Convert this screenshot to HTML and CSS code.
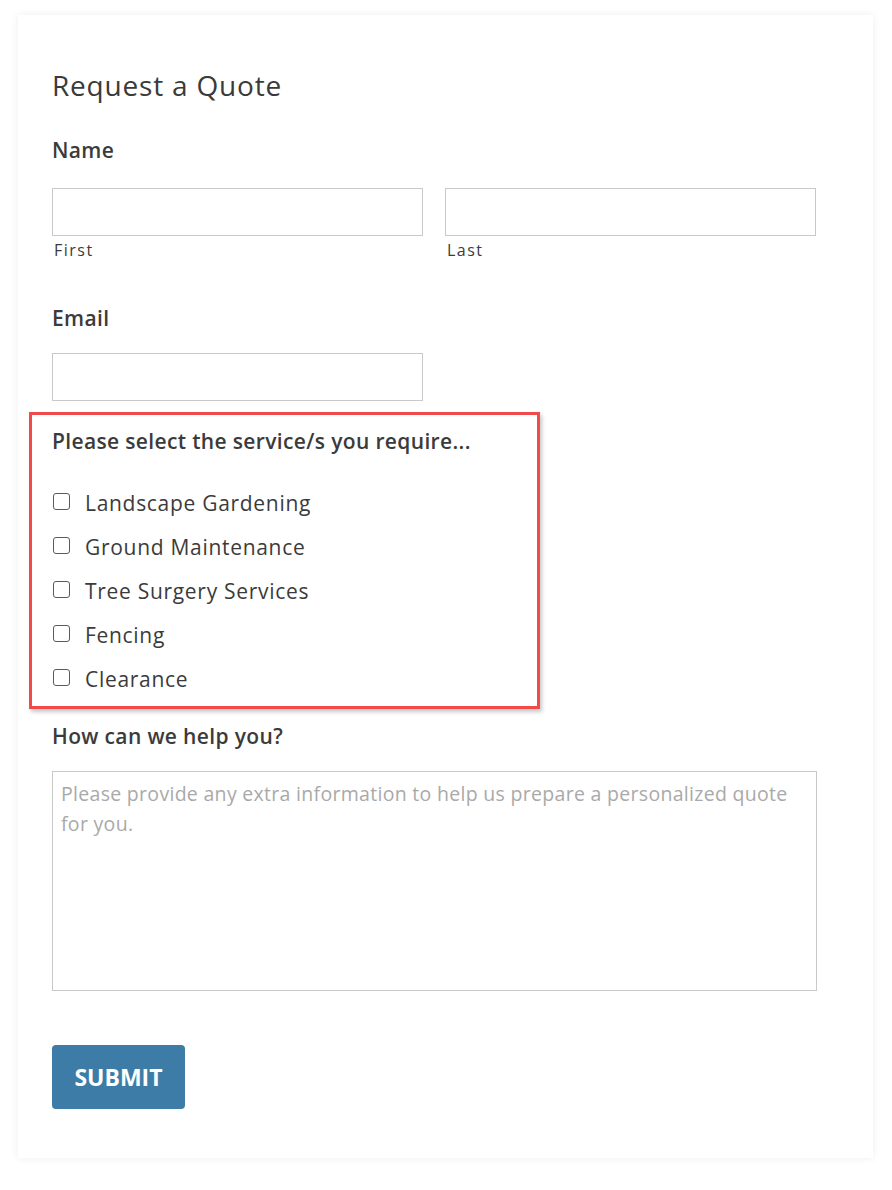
FILE: index.html
```html
<!DOCTYPE html>
<html lang="en">
<head>
<meta charset="utf-8">
<title>Request a Quote</title>
<link rel="stylesheet" href="styles.css">
</head>
<body>
<form class="card">
  <h1 class="title">Request a Quote</h1>

  <div class="field">
    <div class="label">Name</div>
    <div class="name-row">
      <div class="name-col">
        <input class="input" type="text">
        <div class="sublabel">First</div>
      </div>
      <div class="name-col">
        <input class="input" type="text">
        <div class="sublabel">Last</div>
      </div>
    </div>
  </div>

  <div class="field field-email">
    <div class="label">Email</div>
    <input class="input input-half" type="email">
  </div>

  <div class="services">
    <div class="label">Please select the service/s you require...</div>
    <ul class="checks">
      <li class="check"><span class="box"></span><span>Landscape Gardening</span></li>
      <li class="check"><span class="box"></span><span>Ground Maintenance</span></li>
      <li class="check"><span class="box"></span><span>Tree Surgery Services</span></li>
      <li class="check"><span class="box"></span><span>Fencing</span></li>
      <li class="check"><span class="box"></span><span>Clearance</span></li>
    </ul>
  </div>

  <div class="field field-help">
    <div class="label">How can we help you?</div>
    <textarea class="textarea" placeholder="Please provide any extra information to help us prepare a personalized quote for you."></textarea>
  </div>

  <button class="submit" type="button">SUBMIT</button>
</form>
</body>
</html>
```

FILE: styles.css
```css
html, body {
  margin: 0;
  padding: 0;
  background: #ffffff;
}

body {
  font-family: "Open Sans", "Noto Sans", sans-serif;
  color: #3b3b3b;
  padding-top: 15px;
  padding-bottom: 30px;
}

.card {
  display: block;
  box-sizing: border-box;
  width: 855px;
  margin-left: 18px;
  padding: 54px 34px 49px;
  background: #ffffff;
  box-shadow: 0 0 8px rgba(0, 0, 0, 0.07);
}

.title {
  margin: 0;
  font-family: "Open Sans", sans-serif;
  font-weight: 400;
  font-size: 28px;
  line-height: 32px;
  color: #3a3a3a;
  letter-spacing: 0.8px;
}

.label {
  font-family: "Open Sans", sans-serif;
  font-weight: 600;
  font-size: 21px;
  line-height: 24px;
  letter-spacing: 0.35px;
  color: #3b3b3b;
}

.field {
  margin-top: 37px;
}

.field .label {
  margin-bottom: 26px;
}

.name-row {
  display: flex;
  gap: 22px;
}

.name-col {
  width: 371px;
}

.input {
  display: block;
  box-sizing: border-box;
  width: 371px;
  height: 48px;
  margin: 0;
  border: 1px solid #c9c9c9;
  background: #fff;
  font: inherit;
}

.sublabel {
  margin-top: 4px;
  padding-left: 2px;
  font-family: "Open Sans", sans-serif;
  font-size: 16px;
  line-height: 20px;
  letter-spacing: 1.5px;
  color: #3b3b3b;
}

.field-email {
  margin-top: 46px;
}

.field-email .label {
  margin-bottom: 23px;
}

.services {
  box-sizing: border-box;
  width: 511px;
  margin: 11px 0 0 -23px;
  padding: 14px 20px 5px;
  border: 3px solid #f14a4a;
  box-shadow: 2px 3px 4px rgba(0, 0, 0, 0.22);
}

.checks {
  list-style: none;
  margin: 28px 0 0;
  padding: 0;
}

.check {
  display: flex;
  align-items: center;
  height: 44px;
  font-family: "Open Sans", sans-serif;
  font-size: 21px;
  letter-spacing: 0.7px;
  color: #3b3b3b;
}

.box {
  box-sizing: border-box;
  width: 17px;
  height: 17px;
  margin: -4px 15px 0 1px;
  border: 1px solid #5a5a5a;
  border-radius: 3px;
  background: #fff;
  flex: none;
}

.field-help {
  margin-top: 15px;
}

.field-help .label {
  margin-bottom: 23px;
}

.textarea {
  display: block;
  box-sizing: border-box;
  width: 765px;
  height: 220px;
  margin: 0;
  padding: 7px 8px;
  border: 1px solid #c9c9c9;
  resize: none;
  font-family: "Open Sans", sans-serif;
  font-size: 19.5px;
  line-height: 30px;
  letter-spacing: 0.3px;
  color: #3b3b3b;
}

.textarea::placeholder {
  color: #a9a9a9;
}

.submit {
  display: block;
  box-sizing: border-box;
  width: 133px;
  height: 64px;
  margin-top: 54px;
  padding: 0;
  border: none;
  border-radius: 4px;
  background: #3d7ca6;
  color: #ffffff;
  font-family: "Open Sans", sans-serif;
  font-weight: 700;
  font-size: 23px;
  letter-spacing: 0;
}
```
